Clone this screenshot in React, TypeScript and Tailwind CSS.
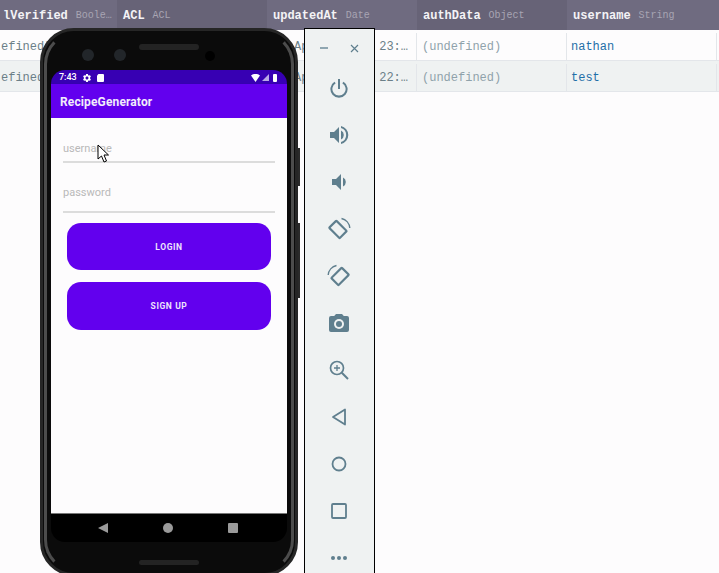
const columns = [
  { name: "lVerified", type: "Boole…", width: "w-[117px]", bg: "bg-[#6f6b80]", pad: "pl-[3px]" },
  { name: "ACL", type: "ACL", width: "w-[150px]", bg: "bg-[#676377]", pad: "pl-[6px]" },
  { name: "updatedAt", type: "Date", width: "w-[150px]", bg: "bg-[#6f6b80]", pad: "pl-[6px]" },
  { name: "authData", type: "Object", width: "w-[150px]", bg: "bg-[#676377]", pad: "pl-[6px]" },
  { name: "username", type: "String", width: "w-[152px]", bg: "bg-[#6f6b80]", pad: "pl-[6px]" },
];

const rows = [
  { verified: "efined)", date: "Ap", time: "23:…", user: "nathan", bg: "bg-[#fdfcfd]" },
  { verified: "efined)", date: "Ap", time: "22:…", user: "test", bg: "bg-[#eff2f2]" },
];

const mono = "font-['Liberation_Mono',monospace]";
const iconColor = "#5f7f8e";

function SideIcon({ children }: { children: React.ReactNode }) {
  return (
    <svg width="24" height="24" viewBox="0 0 24 24" fill={iconColor}>
      {children}
    </svg>
  );
}

function Toolbar() {
  return (
    <div className="absolute left-[304px] top-[28px] w-[71px] h-[545px] bg-[#eff2f2] border-x border-t border-black flex flex-col items-center pr-[1px]">
      <div className="flex items-center justify-between w-[39px] h-[36px] mt-[1px]">
        <div className="w-[8px] h-[1.5px] bg-[#8fa6b1]" />
        <svg width="9" height="9" viewBox="0 0 9 9" stroke={iconColor} strokeWidth="1.2">
          <path d="M1 1l7 7M8 1l-7 7" />
        </svg>
      </div>
      <div className="flex flex-col items-center gap-[23px] mt-[10px]">
        <SideIcon>
          <path d="M11 3h2v10h-2z" />
          <path d="M16.6 5.800l-1.300 1.500a6.600 6.600 0 1 1-6.600 0L7.400 5.800a8.600 8.600 0 1 0 9.200 0z" />
        </SideIcon>
        <SideIcon>
          <path d="M3 9v6h4l5 5V4L7 9z" />
          <path d="M14 7.500v9a5 5 0 0 0 0-9z" />
          <path d="M14 3v2.100a7.200 7.200 0 0 1 0 13.800V21a9.200 9.200 0 0 0 0-18z" />
        </SideIcon>
        <SideIcon>
          <path d="M5 9v6h4l5 5V4L9 9z" />
          <path d="M16 7.500v9a5 5 0 0 0 0-9z" />
        </SideIcon>
        <SideIcon>
          <path d="M10.500 3.300a1.700 1.700 0 0 0-2.400 0L1.800 9.600a1.700 1.700 0 0 0 0 2.400l9.600 9.600a1.700 1.700 0 0 0 2.400 0l6.300-6.300a1.700 1.700 0 0 0 0-2.400zM12.600 19.700l-8.900-8.900 5.600-5.600 8.900 8.900z" />
          <path d="M14.500 1.500A10.500 10.500 0 0 1 22.800 11" fill="none" stroke={iconColor} strokeWidth="1.400" />
        </SideIcon>
        <SideIcon>
          <path d="M13.500 3.300a1.700 1.700 0 0 1 2.400 0l6.300 6.300a1.700 1.700 0 0 1 0 2.400l-9.600 9.600a1.700 1.700 0 0 1-2.400 0l-6.300-6.300a1.700 1.700 0 0 1 0-2.400zM11.400 19.700l8.900-8.900-5.600-5.600-8.900 8.900z" />
          <path d="M9.500 1.500A10.500 10.500 0 0 0 1.200 11" fill="none" stroke={iconColor} strokeWidth="1.400" />
        </SideIcon>
        <SideIcon>
          <path d="M9 3L7.200 5H4a2 2 0 0 0-2 2v12a2 2 0 0 0 2 2h16a2 2 0 0 0 2-2V7a2 2 0 0 0-2-2h-3.200L15 3z" />
          <circle cx="12" cy="13" r="5" fill="#eff2f2" />
          <circle cx="12" cy="13" r="3" />
        </SideIcon>
        <SideIcon>
          <circle cx="10" cy="10" r="6.500" fill="none" stroke={iconColor} strokeWidth="1.700" />
          <path d="M14.800 14.800L21 21" fill="none" stroke={iconColor} strokeWidth="2" />
          <path d="M10 7v6M7 10h6" fill="none" stroke={iconColor} strokeWidth="1.300" />
        </SideIcon>
        <SideIcon>
          <path d="M18 4.500v15L6 12z" fill="none" stroke={iconColor} strokeWidth="1.800" strokeLinejoin="round" />
        </SideIcon>
        <SideIcon>
          <circle cx="12" cy="12" r="6.500" fill="none" stroke={iconColor} strokeWidth="1.800" />
        </SideIcon>
        <SideIcon>
          <rect x="5" y="5" width="14" height="14" rx="1" fill="none" stroke={iconColor} strokeWidth="1.800" />
        </SideIcon>
        <SideIcon>
          <circle cx="6" cy="12" r="2" />
          <circle cx="12" cy="12" r="2" />
          <circle cx="18" cy="12" r="2" />
        </SideIcon>
      </div>
    </div>
  );
}

function Phone() {
  return (
    <div className="absolute left-[40px] top-[28px] w-[258px] h-[548px]">
      {/* side buttons */}
      <div className="absolute right-[-2px] top-[120px] w-[3px] h-[38px] bg-[#2a2a2a]" />
      <div className="absolute right-[-2px] top-[195px] w-[3px] h-[75px] bg-[#2a2a2a]" />
      <div className="w-full h-full rounded-[34px] bg-[#0b0b0b] border-[3px] border-[#262626] relative font-['Roboto',sans-serif]">
        <div className="absolute inset-[1px] rounded-[32px] border-[3px] border-[#4c4c4c] border-t-transparent border-b-transparent" />
        {/* cameras and speaker */}
        <div className="absolute left-[39px] top-[18px] w-[12px] h-[12px] rounded-full bg-[#22262a]" />
        <div className="absolute left-[71px] top-[18px] w-[12px] h-[12px] rounded-full bg-[#22262a]" />
        <div className="absolute left-[96px] top-[13px] w-[60px] h-[6px] rounded-full bg-[#232323]" />
        <div className="absolute left-[162px] top-[20px] w-[10px] h-[10px] rounded-full bg-black" />
        <div className="absolute left-[96px] top-[529px] w-[60px] h-[5px] rounded-full bg-[#232323]" />

        <div className="absolute left-[8px] top-[39px] w-[236px] h-[472px] rounded-[14px] overflow-hidden flex flex-col">
          <div className="h-[14px] bg-[#3700b3] flex items-center justify-between pl-[8px] pr-[10px] pt-[1px] text-white">
            <div className="flex items-center gap-[5px]">
              <span className="text-[9px] font-medium leading-none">7:43</span>
              <svg width="10" height="10" viewBox="0 0 24 24" fill="white">
                <path d="M19.14 12.94c.04-.3.06-.61.06-.94 0-.32-.02-.64-.07-.94l2.03-1.58c.18-.14.23-.41.12-.61l-1.92-3.32c-.12-.22-.37-.29-.59-.22l-2.39.96c-.5-.38-1.03-.7-1.62-.94l-.36-2.54c-.04-.24-.24-.41-.48-.41h-3.84c-.24 0-.43.17-.47.41l-.36 2.54c-.59.24-1.13.57-1.62.94l-2.39-.96c-.22-.08-.47 0-.59.22L2.74 8.87c-.12.21-.08.47.12.61l2.03 1.58c-.05.3-.09.63-.09.94s.02.64.07.94l-2.03 1.58c-.18.14-.23.41-.12.61l1.92 3.32c.12.22.37.29.59.22l2.39-.96c.5.38 1.03.7 1.62.94l.36 2.54c.05.24.24.41.48.41h3.84c.24 0 .44-.17.47-.41l.36-2.54c.59-.24 1.13-.56 1.62-.94l2.39.96c.22.08.47 0 .59-.22l1.92-3.32c.12-.22.07-.47-.12-.61l-2.01-1.58zM12 15.6c-1.98 0-3.6-1.62-3.6-3.6s1.62-3.6 3.6-3.6 3.6 1.62 3.6 3.6-1.62 3.6-3.6 3.6z" />
              </svg>
              <svg width="7" height="8" viewBox="0 0 7 8" fill="white">
                <path d="M1.500 0H6a1 1 0 0 1 1 1v6a1 1 0 0 1-1 1H1a1 1 0 0 1-1-1V1.500z" />
              </svg>
            </div>
            <div className="flex items-center gap-[2px]">
              <svg width="9" height="8" viewBox="0 0 9 8" fill="white">
                <path d="M0 1.500a7 7 0 0 1 9 0L4.500 8z" />
              </svg>
              <svg width="7" height="7" viewBox="0 0 7 7" fill="#b9a8e6">
                <path d="M7 0v7H0z" />
              </svg>
              <div className="w-[4px] h-[8px] ml-[2px] bg-white rounded-[1px]" />
            </div>
          </div>
          <div className="h-[34px] bg-[#6200ee] flex items-center pl-[9px] pt-[1px] text-[12px] font-bold tracking-[0.13px] text-[#f1ecfb] shadow-[0_1px_2px_rgba(0,0,0,0.25)]">
            RecipeGenerator
          </div>
          <div className="flex flex-col flex-1 px-[12px] pt-[23px] bg-[#fdfcfd]">
            <div className="h-[22px] border-b-2 border-[#dcdcdc] text-[11px] text-[#b9b9b9] leading-[16px]">username</div>
            <div className="mt-[22px] h-[28px] border-b-2 border-[#dcdcdc] text-[11px] text-[#b9b9b9] leading-[16px]">password</div>
            <button className="mt-[10px] mx-[4px] h-[47px] pt-[1px] rounded-[14px] bg-[#6200ee] text-[8.5px] font-bold tracking-[0.6px] text-[#ede4fc]">
              LOGIN
            </button>
            <button className="mt-[12px] mx-[4px] h-[48px] pt-[1px] rounded-[14px] bg-[#6200ee] text-[8.5px] font-bold tracking-[0.6px] text-[#ede4fc]">
              SIGN UP
            </button>
          </div>
          <div className="h-[29px] bg-black border-t border-[#777777] flex items-center justify-center gap-[55px] pr-[2px]">
            <svg width="10" height="10" viewBox="0 0 10 10" fill="#9a9a9a">
              <path d="M10 0v10L0 5z" />
            </svg>
            <div className="w-[10px] h-[10px] rounded-full bg-[#9a9a9a]" />
            <div className="w-[10px] h-[10px] rounded-[1px] bg-[#9a9a9a]" />
          </div>
        </div>
      </div>
      {/* mouse pointer */}
      <svg className="absolute left-[57px] top-[116px]" width="13" height="20" viewBox="0 0 13 20" fill="white" stroke="black" strokeWidth="1">
        <path d="M1 1v14l3.500-3 2.500 6 2.500-1-2.500-6H11.500z" />
      </svg>
    </div>
  );
}

export default function App() {
  return (
    <div className={`relative w-[719px] h-[573px] overflow-hidden bg-[#fdfcfd] ${mono}`}>
      <div className="flex h-[30px]">
        {columns.map((c) => (
          <div key={c.name} className={`${c.width} ${c.bg} ${c.pad} pt-[1px] flex items-center gap-[8px]`}>
            <span className="text-[12px] font-bold text-[#f4f3f6]">{c.name}</span>
            <span className="text-[10px] text-[#a8a5b3]">{c.type}</span>
          </div>
        ))}
      </div>
      {rows.map((r) => (
        <div key={r.user} className={`flex h-[31px] pt-[3px] border-b border-[#e3e6ea] text-[12px] ${r.bg}`}>
          <div className="w-[117px] pl-[1px] border-r border-[#e3e6ea] flex items-center text-[#6b7f88]">{r.verified}</div>
          <div className="w-[150px] border-r border-[#e3e6ea]" />
          <div className="w-[150px] border-r border-[#e3e6ea] flex items-center justify-between pr-[8px] pl-[27px] text-[#6b7f88]">
            <span>{r.date}</span>
            <span>{r.time}</span>
          </div>
          <div className="w-[150px] border-r border-[#e3e6ea] flex items-center pl-[5px] text-[#8fa2ab]">(undefined)</div>
          <div className="w-[150px] border-r border-[#e3e6ea] flex items-center pl-[4px] text-[#1f6fa8]">{r.user}</div>
        </div>
      ))}
      <Phone />
      <Toolbar />
    </div>
  );
}
